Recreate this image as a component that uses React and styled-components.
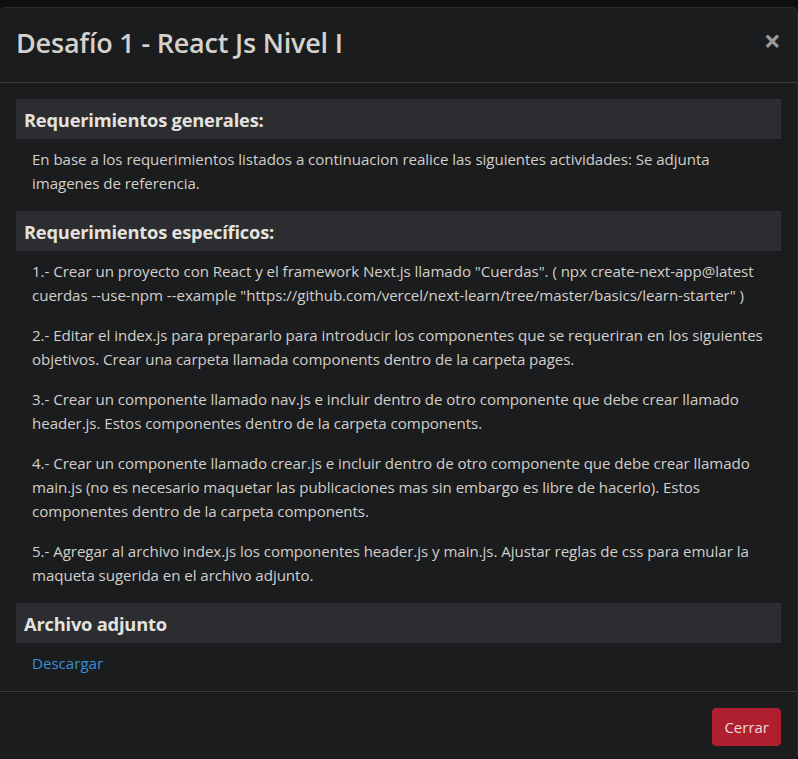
import React from "react";
import styled, { createGlobalStyle } from "styled-components";

const Global = createGlobalStyle`
  html, body { margin: 0; padding: 0; background: #0e0f10; overflow-x: hidden; }
  body { font-family: "Open Sans", "Noto Sans", sans-serif; }
  * { box-sizing: border-box; }
`;

const Backdrop = styled.div`
  min-height: 759px;
  padding-top: 7px;
  background: #0e0f10;
`;

const Modal = styled.div`
  width: 799px;
  margin-left: -1px;
  background: #1b1c1e;
  border: 1px solid #2b2c2e;
  border-radius: 6px;
  overflow: hidden;
`;

const Header = styled.div`
  display: flex;
  align-items: center;
  justify-content: space-between;
  height: 75px;
  padding: 0 16px 5px 16px;
  border-bottom: 1px solid #3a3b3d;
`;

const Title = styled.h4`
  margin: 0;
  font-size: 27px;
  font-weight: 600;
  color: #d5d2cc;
  letter-spacing: -0.2px;
`;

const Close = styled.button`
  border: 0;
  background: none;
  color: #9c9a97;
  font-size: 30px;
  font-weight: 700;
  line-height: 1;
  padding: 0;
  margin-top: -4px;
  cursor: pointer;
  font-family: "Open Sans", sans-serif;
`;

const Body = styled.div`
  padding: 16px 16px 16px 16px;
`;

const Section = styled.section`
  margin-bottom: 12px;
  &:last-child { margin-bottom: 0; }
`;

const SectionTitle = styled.h5`
  margin: 0;
  height: 40px;
  display: flex;
  align-items: center;
  padding: 0 8px;
  background: #2b2d30;
  font-size: 18.3px;
  font-weight: 700;
  color: #e4e2df;
  letter-spacing: -0.2px;
`;

const Content = styled.div`
  padding: 8px 16px 0;
`;

const Text = styled.p`
  margin: 0 0 16px;
  font-size: 15.1px;
  line-height: 24px;
  color: #d2cfca;
  letter-spacing: -0.05px;
`;

const Link = styled.a`
  display: inline-block;
  font-size: 15.1px;
  line-height: 24px;
  color: #3b8dd8;
  text-decoration: none;
`;

const Footer = styled.div`
  display: flex;
  justify-content: flex-end;
  padding: 16px 16px 13px;
  border-top: 1px solid #3a3b3d;
`;

const Button = styled.button`
  height: 38px;
  padding: 0 11px;
  background: #b01f30;
  border: 1px solid #b01f30;
  border-radius: 4px;
  color: #ecdcdc;
  font-family: "Open Sans", sans-serif;
  font-size: 15px;
`;

const items = [
  '1.- Crear un proyecto con React y el framework Next.js llamado "Cuerdas". ( npx create-next-app@latest cuerdas --use-npm --example "https://github.com/vercel/next-learn/tree/master/basics/learn-starter" )',
  "2.- Editar el index.js para prepararlo para introducir los componentes que se requeriran en los siguientes objetivos. Crear una carpeta llamada components dentro de la carpeta pages.",
  "3.- Crear un componente llamado nav.js e incluir dentro de otro componente que debe crear llamado header.js. Estos componentes dentro de la carpeta components.",
  "4.- Crear un componente llamado crear.js e incluir dentro de otro componente que debe crear llamado main.js (no es necesario maquetar las publicaciones mas sin embargo es libre de hacerlo). Estos componentes dentro de la carpeta components.",
  "5.- Agregar al archivo index.js los componentes header.js y main.js. Ajustar reglas de css para emular la maqueta sugerida en el archivo adjunto.",
];

export default function App() {
  return (
    <Backdrop>
      <Global />
      <Modal>
        <Header>
          <Title>Desafío 1 - React Js Nivel I</Title>
          <Close aria-label="Cerrar">×</Close>
        </Header>
        <Body>
          <Section>
            <SectionTitle>Requerimientos generales:</SectionTitle>
            <Content>
              <Text>
                En base a los requerimientos listados a continuacion realice las siguientes actividades: Se adjunta imagenes de referencia.
              </Text>
            </Content>
          </Section>
          <Section>
            <SectionTitle>Requerimientos específicos:</SectionTitle>
            <Content>
              {items.map((t) => (
                <Text key={t}>{t}</Text>
              ))}
            </Content>
          </Section>
          <Section>
            <SectionTitle>Archivo adjunto</SectionTitle>
            <Content>
              <Link href="#">Descargar</Link>
            </Content>
          </Section>
        </Body>
        <Footer>
          <Button>Cerrar</Button>
        </Footer>
      </Modal>
    </Backdrop>
  );
}
